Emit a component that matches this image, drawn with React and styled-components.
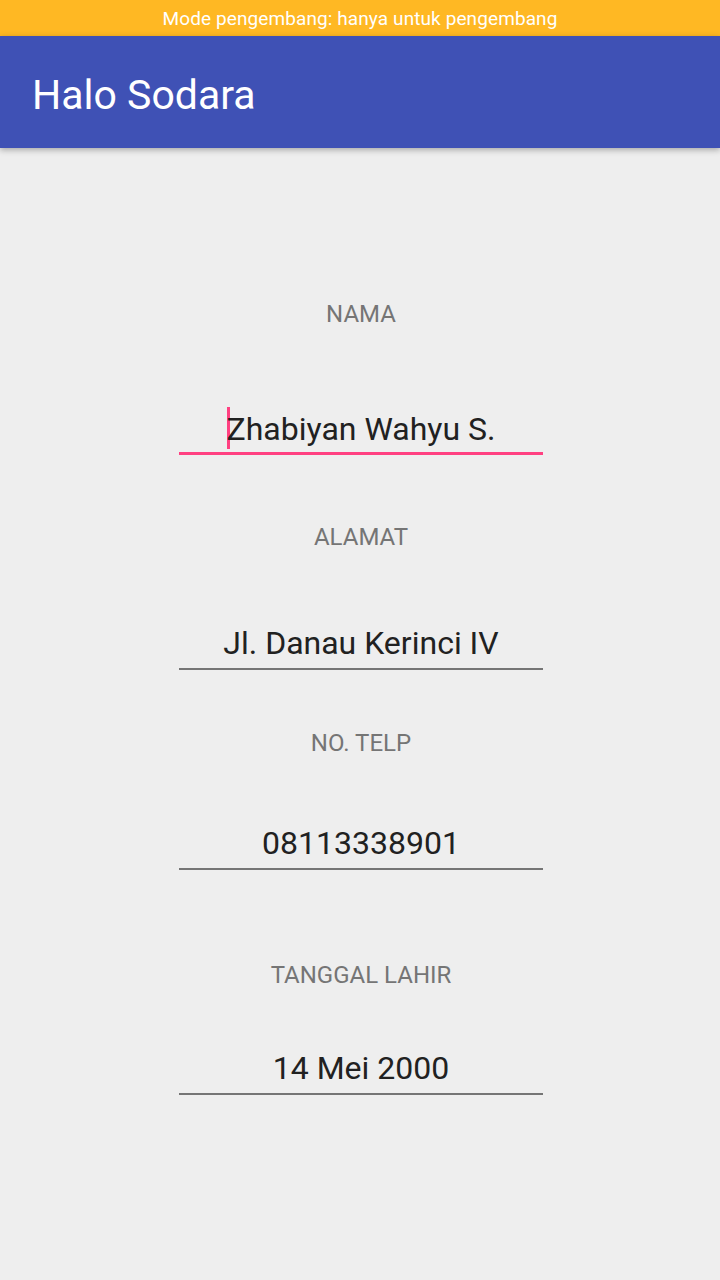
import React from "react";
import styled, { createGlobalStyle } from "styled-components";

const GlobalStyle = createGlobalStyle`
    html, body {
        margin: 0;
        padding: 0;
        background: #eeeeee;
        font-family: Roboto, "Noto Sans", sans-serif;
    }
`;

const Screen = styled.div`
    width: 720px;
    height: 1280px;
    display: flex;
    flex-direction: column;
    background: #eeeeee;
    overflow: hidden;
`;

const StatusBar = styled.div`
    height: 36px;
    display: flex;
    align-items: center;
    justify-content: center;
    background: #ffb823;
    color: #ffffff;
    font-size: 19px;
    letter-spacing: 0.1px;
`;

const AppBar = styled.header`
    height: 112px;
    box-sizing: border-box;
    display: flex;
    align-items: center;
    padding: 6px 0 0 32px;
    background: #3f51b5;
    box-shadow: 0 2px 6px rgba(0, 0, 0, 0.3);
    position: relative;
    z-index: 1;
`;

const Title = styled.h1`
    margin: 0;
    color: #ffffff;
    font-size: 41px;
    font-weight: 400;
`;

const Form = styled.main`
    width: 364px;
    margin-left: 179px;
    display: flex;
    flex-direction: column;
`;

const Label = styled.div`
    margin-top: ${(p) => p.$top}px;
    height: 28px;
    line-height: 28px;
    font-size: 24px;
    color: #757575;
    text-align: center;
`;

const Input = styled.div`
    margin-top: ${(p) => p.$top}px;
    height: 40px;
    line-height: 40px;
    padding-bottom: 5px;
    font-size: 32px;
    color: #212121;
    text-align: center;
    white-space: nowrap;
    border-bottom: 2px solid ${(p) => (p.$focused ? "#ff4081" : "#757575")};
    box-shadow: ${(p) => (p.$focused ? "0 1px 0 #ff4081" : "none")};
`;

const Caret = styled.span`
    display: inline-block;
    width: 3px;
    height: 42px;
    margin-right: -3px;
    background: #ff4081;
    vertical-align: -9px;
`;

const fields = [
    { label: "NAMA", value: "Zhabiyan Wahyu S.", labelTop: 152, inputTop: 79, focused: true },
    { label: "ALAMAT", value: "Jl. Danau Kerinci IV", labelTop: 69, inputTop: 72 },
    { label: "NO. TELP", value: "08113338901", labelTop: 59, inputTop: 66 },
    { label: "TANGGAL LAHIR", value: "14 Mei 2000", labelTop: 91, inputTop: 59 }
];

function App() {
    return (
        <Screen>
            <GlobalStyle />
            <StatusBar>Mode pengembang: hanya untuk pengembang</StatusBar>
            <AppBar>
                <Title>Halo Sodara</Title>
            </AppBar>
            <Form>
                {fields.map((f) => (
                    <React.Fragment key={f.label}>
                        <Label $top={f.labelTop}>{f.label}</Label>
                        <Input $top={f.inputTop} $focused={f.focused}>
                            {f.focused && <Caret />}
                            {f.value}
                        </Input>
                    </React.Fragment>
                ))}
            </Form>
        </Screen>
    );
}

export default App;
